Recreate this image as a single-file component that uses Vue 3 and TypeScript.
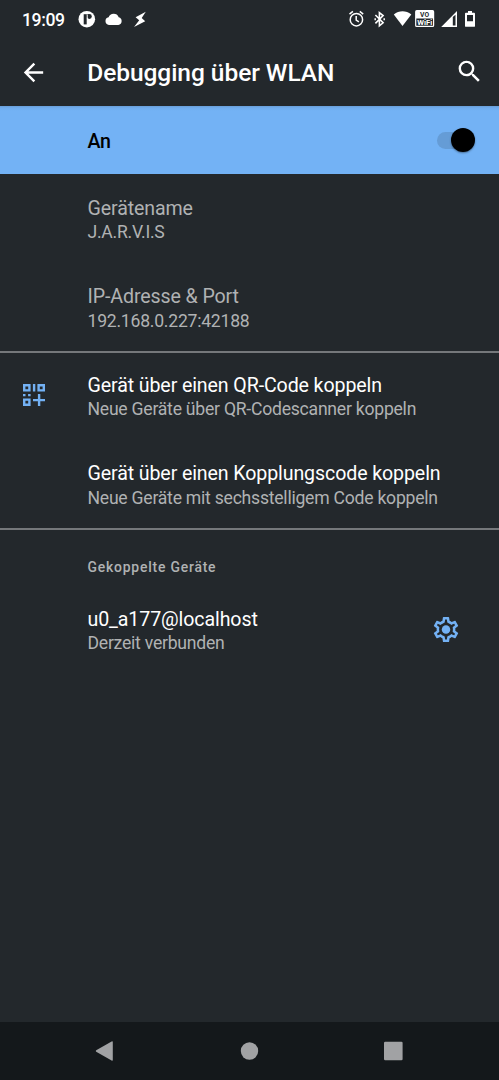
<script setup lang="ts">
interface Entry {
  title: string
  summary: string
  tone: 'muted' | 'active'
  icon?: 'qr'
  action?: 'settings'
}

const deviceInfo: Entry[] = [
  { title: 'Gerätename', summary: 'J.A.R.V.I.S', tone: 'muted' },
  { title: 'IP-Adresse & Port', summary: '192.168.0.227:42188', tone: 'muted' },
]
const pairing: Entry[] = [
  { title: 'Gerät über einen QR-Code koppeln', summary: 'Neue Geräte über QR-Codescanner koppeln', tone: 'active', icon: 'qr' },
  { title: 'Gerät über einen Kopplungscode koppeln', summary: 'Neue Geräte mit sechsstelligem Code koppeln', tone: 'active' },
]
const paired: Entry[] = [
  { title: 'u0_a177@localhost', summary: 'Derzeit verbunden', tone: 'active', action: 'settings' },
]
const groups = [
  { id: 'info', heading: '', entries: deviceInfo },
  { id: 'pairing', heading: '', entries: pairing },
  { id: 'paired', heading: 'Gekoppelte Geräte', entries: paired },
]
</script>

<template>
  <div class="screen">
    <header class="status">
      <span class="clock">19:09</span>
      <svg class="notifications" width="74" height="40" viewBox="76 0 74 40" fill="#fff">
        <circle cx="86.8" cy="19.2" r="8.3" />
        <path d="M83.700 14.200h3v10.200h-3z" fill="#23282c" />
        <circle cx="89.400" cy="16.500" r="2.400" fill="#23282c" />
        <path d="M86.700 14.200h2.200v3.200h-2.200z" fill="#23282c" />
        <path d="M86.900 14.600h.8v5h-.8z" />
        <path d="M109 25a3.900 3.900 0 0 1-.4-7.700 5.400 5.400 0 0 1 10.100-.1A4 4 0 0 1 118.300 25z" />
        <path d="M145.800 11.800L135.600 17.200l3.600 3L134 26.900l11.200-5.700-3.500-3.200z" />
      </svg>
      <svg class="system" width="140" height="40" viewBox="340 0 140 40" fill="none" stroke="#fff">
        <circle cx="356.400" cy="19.700" r="6.200" stroke-width="1.500" />
        <path d="M356.200 15.900v4.200l2.700 1.800M349.500 14.100l3.400-2.700M363.200 14.100l-3.400-2.700" stroke-width="1.500" />
        <path d="M375.400 15l7.700 7.800-3.700 3V12.600l3.700 3-7.700 7.800" stroke-width="1.600" />
        <path d="M375.200 18.200v2M384.200 18.200v2" stroke-width="1.500" />
        <path d="M393.800 14.400c5.300-4.100 12.200-4.100 17.500 0L402.500 26z" fill="#fff" stroke="none" />
        <rect x="415.700" y="10.700" width="17.900" height="15.700" rx="1" stroke-width="1.200" />
        <path d="M416 11h17.300v7.500H416z" fill="#fff" stroke="none" />
        <text x="424.600" y="17.300" class="volte" fill="#23282c" stroke="none" textLength="9" lengthAdjust="spacingAndGlyphs">VO</text>
        <text x="424.700" y="25.200" class="volte" fill="#fff" stroke="none" textLength="15" lengthAdjust="spacingAndGlyphs">WiFi</text>
        <path d="M457 11.100v15.800h-15.800zM452.800 17v8.500h2.700V14.800z" fill="#fff" fill-rule="evenodd" stroke="none" />
        <path d="M468 11h4v1.800h2.100q.9 0 .9.900v12.200q0 .9-.9.900h-8.200q-.9 0-.9-.9V13.700q0-.9.900-.9h2.100zM467 15v6.200h6V15z" fill="#fff" fill-rule="evenodd" stroke="none" />
      </svg>
    </header>

    <div class="toolbar">
      <svg class="back" width="29" height="29" viewBox="0 0 24 24" fill="#fff">
        <path d="M20 11H7.830l5.590-5.590L12 4l-8 8 8 8 1.410-1.410L7.830 13H20z" />
      </svg>
      <h1>Debugging über WLAN</h1>
      <svg class="search" width="29" height="29" viewBox="0 0 24 24" fill="#fff">
        <path d="M15.500 14h-.79l-.28-.27A6.471 6.471 0 0 0 16 9.500 6.500 6.500 0 1 0 9.500 16c1.610 0 3.090-.59 4.230-1.570l.27.28v.79l5 4.990L20.490 19zM9.500 14C7.010 14 5 11.990 5 9.500S7.010 5 9.500 5 14 7.010 14 9.500 11.990 14 9.500 14z" />
      </svg>
    </div>

    <div class="switch-bar">
      <span>An</span>
      <div class="toggle"><div class="thumb"></div></div>
    </div>

    <section v-for="group in groups" :key="group.id" class="group">
      <h2 v-if="group.heading">{{ group.heading }}</h2>
      <div v-for="entry in group.entries" :key="entry.title" class="row" :class="entry.tone">
        <div class="lead">
          <svg v-if="entry.icon === 'qr'" width="22" height="22" viewBox="0 0 22 22" fill="none" stroke="#73b1f4">
            <path d="M1.200 1.200h5.200v5.200H1.200zM15.600 1.200h5.200v5.200h-5.200zM1.200 15.600h5.200v5.200H1.200z" stroke-width="2.400" />
            <path d="M11.100 0v7.600M0 11.100h2.500M5.100 11.100h2.500M16.100 10v12M10 16.100h12" stroke-width="2.400" />
          </svg>
        </div>
        <div class="text">
          <div class="title">{{ entry.title }}</div>
          <div class="summary">{{ entry.summary }}</div>
        </div>
        <svg v-if="entry.action === 'settings'" class="gear" width="30" height="31" viewBox="0 0 24 24" fill="#73b1f4">
          <path d="M19.430 12.980c.04-.32.07-.64.07-.98s-.03-.66-.07-.98l2.110-1.650c.19-.15.24-.42.12-.64l-2-3.460c-.12-.22-.39-.3-.61-.22l-2.490 1c-.52-.4-1.080-.73-1.690-.98l-.38-2.650C14.460 2.180 14.250 2 14 2h-4c-.25 0-.46.18-.49.42l-.38 2.650c-.61.25-1.170.59-1.690.98l-2.490-1c-.23-.09-.49 0-.61.22l-2 3.460c-.13.22-.07.49.12.64l2.110 1.650c-.04.32-.07.65-.07.98s.03.66.07.98l-2.110 1.650c-.19.15-.24.42-.12.64l2 3.460c.12.22.39.3.61.22l2.490-1c.52.4 1.080.73 1.690.98l.38 2.650c.03.24.24.42.49.42h4c.25 0 .46-.18.49-.42l.38-2.650c.61-.25 1.170-.59 1.690-.98l2.490 1c.23.09.49 0 .61-.22l2-3.460c.12-.22.07-.49-.12-.64zm-1.980-1.710c.04.31.05.52.05.73 0 .21-.02.43-.05.73l-.14 1.130.89.7 1.080.84-.7 1.210-1.270-.51-1.040-.42-.9.68c-.43.32-.84.56-1.250.73l-1.060.43-.16 1.130-.2 1.350h-1.400l-.19-1.350-.16-1.130-1.060-.43c-.43-.18-.83-.41-1.230-.71l-.91-.7-1.060.43-1.270.51-.7-1.210 1.080-.84.89-.7-.14-1.130c-.03-.31-.05-.54-.05-.74s.02-.43.05-.73l.14-1.130-.89-.7-1.080-.84.7-1.210 1.270.51 1.040.42.9-.68c.43-.32.84-.56 1.250-.73l1.060-.43.16-1.130.2-1.350h1.390l.19 1.350.16 1.130 1.060.43c.43.18.83.41 1.230.71l.91.7 1.060-.43 1.270-.51.7 1.210-1.070.85-.89.7z" fill-rule="evenodd" />
          <circle cx="12" cy="12" r="3.400" />
        </svg>
      </div>
    </section>

    <nav>
      <svg width="499" height="58" viewBox="0 0 499 58" fill="#a1a2a4">
        <path d="M96.200 28.300l15.400-8.800q1.200-.6 1.200.7v17.600q0 1.300-1.200.7l-15.400-8.800q-1-.7 0-1.400z" />
        <circle cx="249.500" cy="29" r="8.700" />
        <rect x="384" y="19.800" width="18.600" height="18.500" rx="1.200" />
      </svg>
    </nav>
  </div>
</template>

<style>
body {
  margin: 0;
  background: #23282c;
}
</style>

<style scoped>
.screen {
  width: 499px;
  height: 1080px;
  display: flex;
  flex-direction: column;
  overflow: hidden;
  background: #23282c;
  color: #fff;
  font-family: Roboto, sans-serif;
}
svg {
  display: block;
  flex: none;
}
.status {
  height: 40px;
  display: flex;
  align-items: center;
  flex: none;
}
.clock {
  width: 54px;
  padding-left: 22px;
  font-size: 17.600px;
  font-weight: 500;
  letter-spacing: -0.4px;
  line-height: 40px;
}
.system {
  margin-left: 190px;
}
.volte {
  font-size: 7px;
  font-weight: 700;
  text-anchor: middle;
}
.toolbar {
  height: 66px;
  display: flex;
  align-items: center;
  flex: none;
  box-sizing: border-box;
  padding: 0 15px 0 19.400px;
}
.back {
  margin-top: -2px;
}
h1 {
  flex: 1;
  margin: 0 0 0 38.800px;
  font-size: 24.500px;
  font-weight: 500;
  letter-spacing: -0.050px;
  line-height: 30px;
  white-space: nowrap;
}
.search {
  margin-top: -3px;
}
.switch-bar {
  height: 68px;
  display: flex;
  align-items: center;
  justify-content: space-between;
  flex: none;
  box-sizing: border-box;
  padding: 2px 24px 0 87.500px;
  background: linear-gradient(#689dd7, #70adef 2px, #73b2f5 5px);
  color: #000;
  font-size: 19.600px;
  font-weight: 500;
  letter-spacing: -0.3px;
}
.toggle {
  width: 38px;
  height: 17px;
  display: flex;
  align-items: center;
  justify-content: flex-end;
  border-radius: 9px;
  background: #659cd6;
  margin-top: -2px;
}
.thumb {
  width: 24.500px;
  height: 24.500px;
  flex: none;
  border-radius: 50%;
  background: #000;
  box-shadow: 0 1px 2px #0006;
}
.group + .group {
  box-shadow: inset 0 2px #75787b;
}
.row {
  height: 88.500px;
  display: flex;
  align-items: center;
}
.lead {
  width: 64.500px;
  padding-left: 23px;
}
.text {
  flex: 1;
  padding-top: 3.500px;
  white-space: nowrap;
}
.title {
  font-size: 19.600px;
  letter-spacing: -0.110px;
  line-height: 25px;
}
.summary {
  margin-top: -0.500px;
  font-size: 17.600px;
  letter-spacing: -0.240px;
  line-height: 24px;
  color: #b0b2b3;
}
.muted .title {
  color: #b0b2b3;
}
.gear {
  margin-right: 38.500px;
}
h2 {
  height: 57px;
  margin: 0;
  padding: 0 0 0 87.500px;
  font-size: 13.900px;
  font-weight: 500;
  letter-spacing: 0.800px;
  line-height: 79px;
  color: #b0b2b3;
}
nav {
  height: 58px;
  margin-top: auto;
  flex: none;
  background: #14181b;
}
</style>
